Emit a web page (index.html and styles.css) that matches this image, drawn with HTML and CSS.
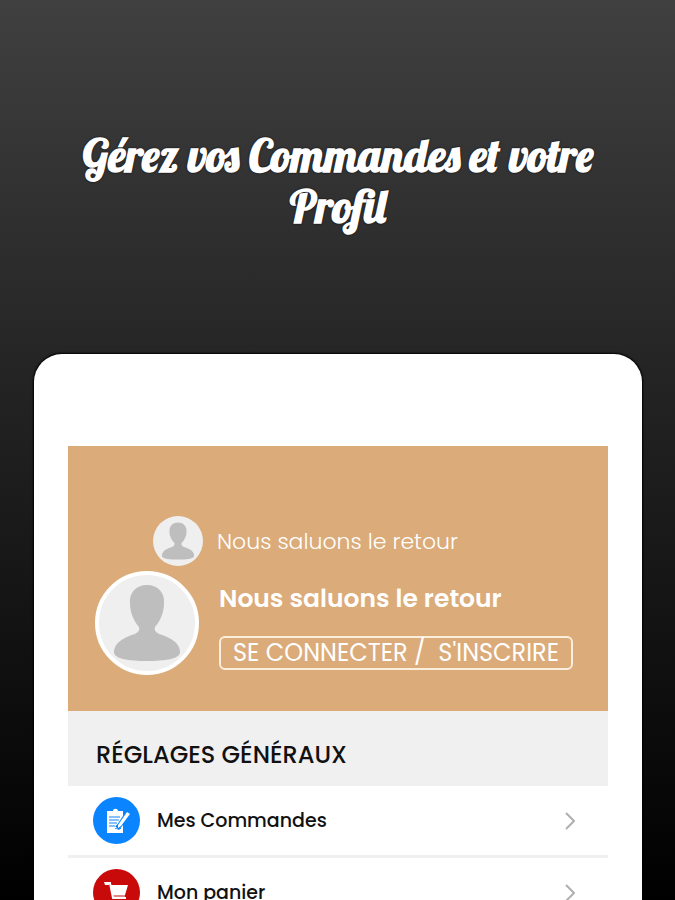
FILE: index.html
```
<!DOCTYPE html>
<html lang="fr">
<head>
<meta charset="UTF-8" />
<meta name="viewport" content="width=device-width, initial-scale=1" />
<title>Gérez vos Commandes et votre Profil</title>
<link rel="stylesheet" href="styles.css">
</head>
<body>

<main class="page">
  <h1 class="headline">Gérez vos Commandes et votre Profil</h1>

  <div class="device">
    <section class="profile">
      <div class="profile-top">
        <svg class="avatar avatar-small" viewBox="0 0 100 100" aria-hidden="true">
          <circle cx="50" cy="50" r="50" fill="#efefef" />
          <path d="M50 13C39 13 32 21 33 32C33 41 37 48 43 54C44 62 36 62 28 66C20 70 17 75 18 81C20 86 34 87 50 87C66 87 80 86 82 81C83 75 80 70 72 66C64 62 56 62 57 54C63 48 67 41 67 32C68 21 61 13 50 13Z" fill="#bebebe" />
        </svg>
        <span class="welcome-light">Nous saluons le retour</span>
      </div>
      <div class="profile-main">
        <svg class="avatar avatar-large" viewBox="0 0 104 104" aria-hidden="true">
          <circle cx="52" cy="52" r="50" fill="#efefef" stroke="#fff" stroke-width="4" />
          <path d="M52 14C41 14 34 22 35 32C35 42 39 50 44 56C46 63 37 63 30 67C22 71 19 76 19 81C19 88 34 90 52 90C70 90 85 88 85 81C85 76 82 71 74 67C67 63 58 63 60 56C65 50 69 42 69 32C70 22 63 14 52 14Z" fill="#bebebe" />
        </svg>
        <div class="profile-info">
          <p class="welcome-bold">Nous saluons le retour</p>
          <button class="login-btn" type="button">SE CONNECTER /&nbsp; S'INSCRIRE</button>
        </div>
      </div>
    </section>

    <h2 class="section-title">RÉGLAGES GÉNÉRAUX</h2>

    <nav class="menu">
      <a class="menu-item" href="#commandes">
        <span class="menu-icon blue">
          <svg viewBox="0 0 26 26" aria-hidden="true">
            <path d="M3 3H7V6H15V3H19V25H3Z" fill="#fff" />
            <path d="M7 6V3H9C9 0 14 0 14 3H16V6Z" fill="#fff" />
            <path d="M5 9H16M5 12H15M5 15H13M5 18H11" stroke="#0a84ff" stroke-width="1" />
            <path d="M24 5L16 17L13 20" stroke="#0a84ff" stroke-width="5" fill="none" />
            <path d="M23 4L26 6L17 18L14 20L14 17Z" fill="#fff" />
            <path d="M11 21C13 19 14 23 17 20" stroke="#0a84ff" stroke-width="1" fill="none" />
          </svg>
        </span>
        <span class="menu-label">Mes Commandes</span>
        <svg class="chevron" viewBox="0 0 10 18" aria-hidden="true">
          <path d="M1 1L9 9L1 17" />
        </svg>
      </a>
      <a class="menu-item" href="#panier">
        <span class="menu-icon red">
          <svg viewBox="0 0 26 26" aria-hidden="true">
            <path d="M1 3H6L9 18H22" stroke="#fff" stroke-width="2" fill="none" />
            <path d="M0 2H5V5H1Z" fill="#fff" />
            <path d="M6 5H24L21 15H8Z" fill="#fff" />
            <path d="M9 16H21" stroke="#fff" stroke-width="1" />
            <circle cx="12" cy="22" r="2" fill="#fff" />
            <circle cx="20" cy="22" r="2" fill="#fff" />
          </svg>
        </span>
        <span class="menu-label">Mon panier</span>
        <svg class="chevron" viewBox="0 0 10 18" aria-hidden="true">
          <path d="M1 1L9 9L1 17" />
        </svg>
      </a>
    </nav>
  </div>
</main>

</body>
</html>
```
FILE: styles.css
```
* {
  box-sizing: border-box;
}
body {
  margin: 0;
  font-family: Poppins, Inter, "Liberation Sans", sans-serif;
  color: #111;
}
.page {
  display: flex;
  flex-direction: column;
  height: 100vh;
  overflow: hidden;
  padding: 130px 33px 0 34px;
  background: linear-gradient(#404040, #252525 40%, #000);
}
.headline {
  flex: none;
  min-height: 224px;
  margin: 0;
  padding: 0 40px;
  color: #fff;
  font-family: Lobster, "Liberation Serif", serif;
  font-size: 45px;
  font-weight: bold;
  line-height: 51px;
  text-align: center;
  text-shadow: 0 0 2px #000;
}
.device {
  flex: none;
  padding: 92px 34px 34px;
  background: #fff;
  border-radius: 28px 28px 0 0;
  box-shadow: 0 0 2px 1px #000;
}
.profile {
  padding: 70px 27px 36px;
  background: #dbab79;
  color: #fff;
}
.profile-top {
  display: flex;
  align-items: center;
  gap: 14px;
  padding-left: 58px;
  margin-bottom: 5px;
}
.avatar {
  flex: none;
  display: block;
}
.avatar-small {
  width: 50px;
  height: 50px;
}
.avatar-large {
  width: 104px;
  height: 104px;
}
.profile-main {
  display: flex;
  gap: 20px;
}
.welcome-light {
  font-size: 22px;
  font-weight: 300;
}
.welcome-bold {
  margin: 10px 0 19px;
  font-size: 25px;
  font-weight: 600;
  line-height: 36px;
}
.login-btn {
  height: 34px;
  padding: 0 12px;
  background: none;
  border: 2px solid #fbeedd;
  border-radius: 6px;
  color: #fff;
  font-family: inherit;
  font-size: 24px;
  font-weight: 400;
  line-height: 30px;
  white-space: nowrap;
  cursor: pointer;
}
.section-title {
  margin: 0;
  padding: 26px 28px 13px;
  background: #f0f0f0;
  font-size: 24px;
  font-weight: 500;
  line-height: 36px;
}
.menu-item {
  display: flex;
  align-items: center;
  gap: 17px;
  padding: 11px 33px 11px 25px;
  border-bottom: 3px solid #f0f0f0;
  color: #111;
  text-decoration: none;
}
.menu-icon {
  display: flex;
  align-items: center;
  justify-content: center;
  width: 47px;
  height: 47px;
  border-radius: 50%;
}
.menu-icon svg {
  width: 26px;
  height: 26px;
}
.blue {
  background: #0a84ff;
}
.red {
  background: #c80a0a;
}
.menu-label {
  flex: 1;
  font-size: 19px;
  font-weight: 500;
}
.chevron {
  width: 10px;
  height: 18px;
  fill: none;
  stroke: #b0b0b0;
  stroke-width: 2;
}
```
